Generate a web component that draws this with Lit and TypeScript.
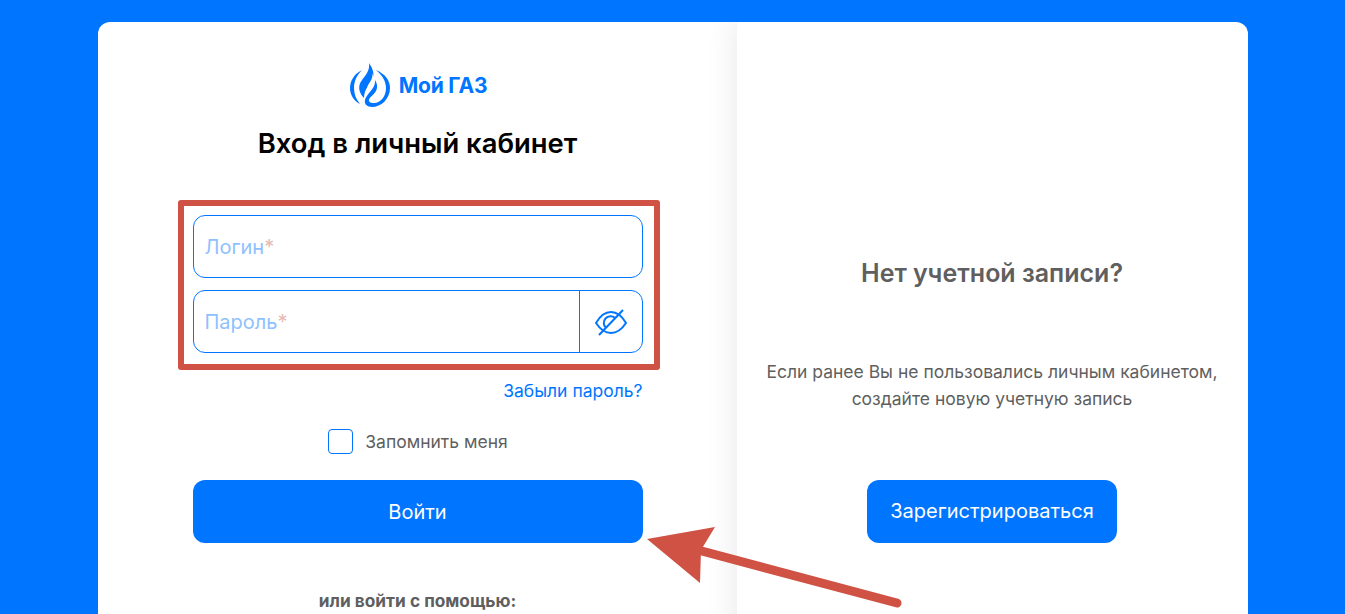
import { LitElement, html, css } from 'lit';
import { customElement } from 'lit/decorators.js';

@customElement('app-root')
export class AppRoot extends LitElement {
  static styles = css`
    :host {
      display: block;
      position: relative;
      height: 614px;
      overflow: hidden;
      background: #0075ff;
      font-family: Inter, 'Liberation Sans', sans-serif;
    }

    .page {
      display: flex;
      justify-content: center;
      padding-top: 22px;
    }

    .card {
      display: flex;
      width: 1150px;
      height: 800px;
      background: #fff;
      border-radius: 12px;
      overflow: hidden;
    }

    .login {
      width: 639px;
      box-sizing: border-box;
      padding-left: 1px;
      display: flex;
      flex-direction: column;
      align-items: center;
    }

    .logo {
      display: flex;
      align-items: center;
      gap: 8px;
      margin: 40px 0 0 2px;
      height: 46px;
    }

    .logo-text {
      font-size: 21px;
      font-weight: 700;
      color: #0075ff;
      letter-spacing: -0.2px;
    }

    h1 {
      margin: 17px 0 0;
      font-size: 27.4px;
      line-height: 36px;
      font-weight: 600;
      color: #000;
    }

    .form {
      width: 450px;
      margin-top: 54px;
      display: flex;
      flex-direction: column;
    }

    .field {
      height: 63px;
      box-sizing: border-box;
      border: 1px solid #0075ff;
      border-radius: 12px;
      display: flex;
      align-items: center;
      margin-bottom: 12px;
      font-size: 20px;
      color: #8fc1fd;
    }

    .label {
      flex: 1;
      padding-left: 11px;
    }

    .star {
      color: #e8b9b5;
    }

    .eye {
      width: 63px;
      height: 100%;
      box-sizing: border-box;
      border-left: 1px solid #0075ff;
      display: flex;
      align-items: center;
      justify-content: center;
    }

    .forgot {
      align-self: flex-end;
      margin-top: 14px;
      font-size: 17.5px;
      line-height: 24px;
      color: #0075ff;
    }

    .remember {
      display: flex;
      align-items: center;
      justify-content: center;
      gap: 12px;
      margin-top: 26px;
      padding-left: 1px;
      font-size: 17.5px;
      line-height: 25px;
      color: #5f5f5f;
    }

    .box {
      width: 25px;
      height: 25px;
      box-sizing: border-box;
      border: 1px solid #0075ff;
      border-radius: 4px;
    }

    .btn {
      height: 63px;
      background: #0075ff;
      border-radius: 12px;
      display: flex;
      align-items: center;
      justify-content: center;
      color: #fff;
      font-size: 20px;
    }

    .submit {
      margin-top: 26px;
    }

    .alt {
      margin-top: 48px;
      text-align: center;
      font-size: 17.3px;
      line-height: 20px;
      font-weight: 700;
      color: #5f5f5f;
    }

    .signup {
      flex: 1;
      position: relative;
      display: flex;
      flex-direction: column;
      align-items: center;
      box-shadow: 0 0 30px rgba(0, 0, 0, 0.1);
      text-align: center;
      color: #5f5f5f;
    }

    h2 {
      margin: 233px 0 0;
      font-size: 25px;
      line-height: 36px;
      font-weight: 600;
    }

    .signup p {
      margin: 67px 0 0;
      font-size: 17.5px;
      line-height: 27px;
    }

    .register {
      width: 250px;
      margin-top: 68px;
      padding-bottom: 1px;
      box-sizing: border-box;
    }

    .frame {
      position: absolute;
      left: 178px;
      top: 200px;
      width: 482px;
      height: 170px;
      box-sizing: border-box;
      border: 6px solid #cf5244;
      border-radius: 3px;
    }

    .arrow {
      position: absolute;
      left: 640px;
      top: 520px;
    }
  `;

  render() {
    return html`
      <div class="page">
        <div class="card">
          <section class="login">
            <div class="logo">
              <svg width="41" height="45" viewBox="5 3 41 45" fill="#0075ff">
                <path d="M17 10C9 14 5 21 5 28c0 7 4 13 10 16-4-5-6-10-6-16 0-7 3-13 8-18Z" />
                <path d="M31 10c9 4 14 10 14 18 0 11-9 19-18 19-5 0-8-3-7-7 1-5 7-9 9-14 1-2 1-4 1-6 2 3 3 7 1 11-3 5-8 7-7 10 1 2 3 2 5 2 7 0 12-7 12-15 0-7-4-13-10-18Z" />
                <path d="M24 3c4 6 6 11 3 17-3 5-8 10-8 18-6-6-6-13-2-18 4-5 8-10 7-17Z" />
                <path d="M27 13c2 4 2 8-1 12-2 3-5 6-5 10 0-5 1-9 4-13 2-3 3-6 2-9Z" fill="#fff" />
              </svg>
              <span class="logo-text">Мой ГАЗ</span>
            </div>
            <h1>Вход в личный кабинет</h1>
            <div class="form">
              <div class="field"><span class="label">Логин<span class="star">*</span></span></div>
              <div class="field">
                <span class="label">Пароль<span class="star">*</span></span>
                <span class="eye">
                  <svg width="34" height="28" viewBox="0 0 34 28" fill="none" stroke="#0075ff" stroke-width="2">
                    <path d="M2 15C6 8 11 4 17 4s11 4 15 11c-4 6-9 10-15 10S6 21 2 15Z" />
                    <path d="M12 20a6.5 6.5 0 0 1 9-10" />
                    <path d="M5 27 29 2" />
                  </svg>
                </span>
              </div>
              <span class="forgot">Забыли пароль?</span>
              <div class="remember"><span class="box"></span>Запомнить меня</div>
              <div class="btn submit">Войти</div>
              <div class="alt">или войти с помощью:</div>
            </div>
          </section>
          <section class="signup">
            <h2>Нет учетной записи?</h2>
            <p>Если ранее Вы не пользовались личным кабинетом,<br />создайте новую учетную запись</p>
            <div class="btn register">Зарегистрироваться</div>
          </section>
        </div>
      </div>
      <div class="frame"></div>
      <svg class="arrow" width="270" height="94" viewBox="0 0 270 94">
        <path d="M58 30 257 83" stroke="#cf5244" stroke-width="9" stroke-linecap="round" />
        <path d="M7 19 75 7 61 30 60 63Z" fill="#cf5244" />
      </svg>
    `;
  }
}
